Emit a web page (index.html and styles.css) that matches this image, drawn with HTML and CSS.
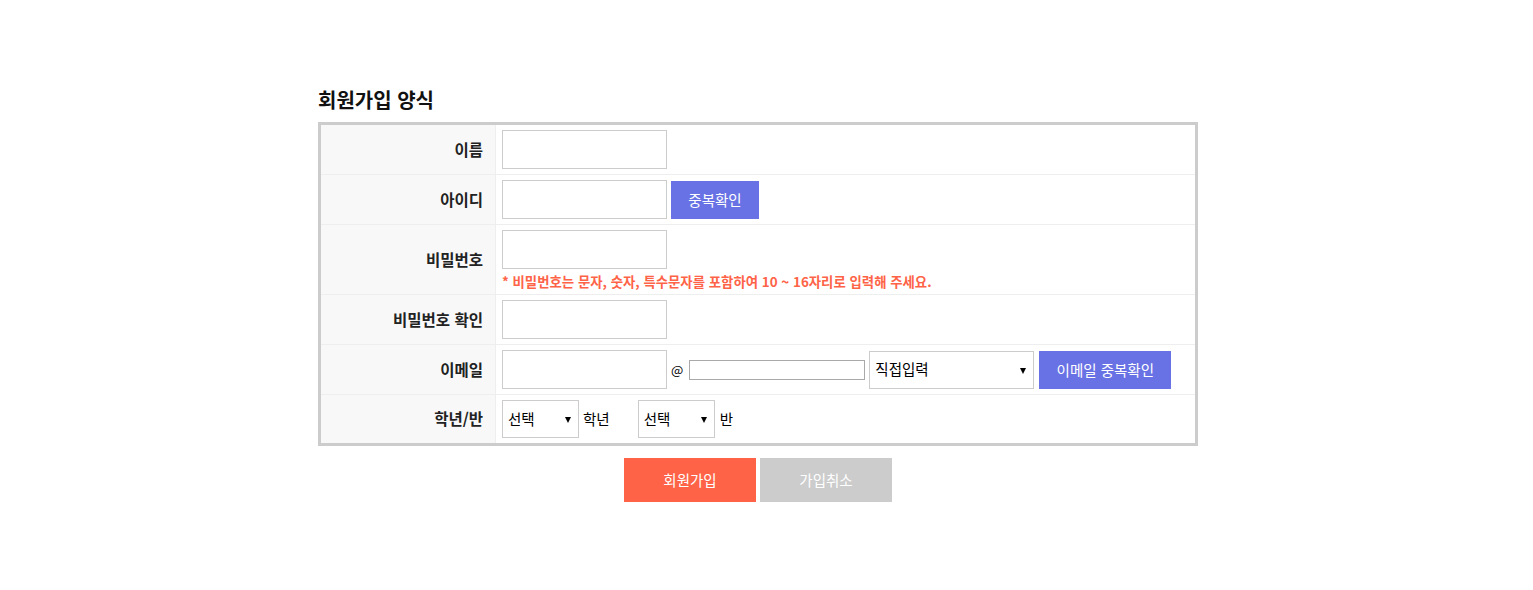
FILE: index.html
```html
<!DOCTYPE html>
<html lang="ko">
<head>
<meta charset="utf-8">
<title>회원가입 양식</title>
<link rel="stylesheet" href="styles.css">
</head>
<body>
<div class="page">
  <div class="wrap">
    <h2 class="title">회원가입 양식</h2>
    <table class="form-table">
      <tr>
        <th>이름</th>
        <td><input class="txt" type="text"></td>
      </tr>
      <tr>
        <th>아이디</th>
        <td><div class="line"><input class="txt" type="text"><button class="btn-blue btn-dup">중복확인</button></div></td>
      </tr>
      <tr class="tall">
        <th>비밀번호</th>
        <td><input class="txt" type="password"><p class="msg">* 비밀번호는 문자, 숫자, 특수문자를 포함하여 10 ~ 16자리로 입력해 주세요.</p></td>
      </tr>
      <tr>
        <th>비밀번호 확인</th>
        <td><input class="txt" type="password"></td>
      </tr>
      <tr>
        <th>이메일</th>
        <td><div class="line">
          <input class="txt" type="text">
          <span class="at">@</span>
          <input class="domain" type="text">
          <span class="sel sel-wide">직접입력</span>
          <button class="btn-blue btn-email">이메일 중복확인</button>
        </div></td>
      </tr>
      <tr class="last">
        <th>학년/반</th>
        <td><div class="line">
          <span class="sel sel-small">선택</span>
          <span class="unit unit-grade">학년</span>
          <span class="sel sel-small">선택</span>
          <span class="unit unit-class">반</span>
        </div></td>
      </tr>
    </table>
    <div class="actions">
      <button class="btn-submit">회원가입</button>
      <button class="btn-cancel">가입취소</button>
    </div>
  </div>
</div>
</body>
</html>
```
FILE: styles.css
```css
* { box-sizing: border-box; }
html, body { margin: 0; padding: 0; background: #fff; }
body {
  font-family: "Noto Sans CJK KR", "Noto Sans", sans-serif;
  color: #222;
}
.page { padding: 87px 17px 0 0; }
.wrap { width: 880px; margin: 0 auto; }
.title {
  margin: 0 0 9px 0;
  font-size: 20px;
  line-height: 26px;
  font-weight: bold;
  color: #111;
}
.form-table {
  width: 880px;
  border-collapse: collapse;
  border: 3px solid #ccc;
}
.form-table th {
  width: 176px;
  background: #f8f8f8;
  text-align: right;
  font-size: 15.5px;
  font-weight: bold;
  color: #222;
  padding: 0 12px 2px 0;
  border-right: 1px solid #eee;
  border-bottom: 1px solid #eee;
  vertical-align: middle;
}
.form-table td {
  padding: 5px 6px;
  border-bottom: 1px solid #eee;
  vertical-align: middle;
  height: 50px;
}
.form-table tr.last th, .form-table tr.last td { border-bottom: none; }
.form-table tr.last td { height: 49px; }
.line { display: flex; align-items: center; }
.txt {
  display: block;
  width: 165px;
  height: 39px;
  border: 1px solid #ccc;
  margin: 0;
  padding: 0 6px;
  font-size: 14px;
  font-family: inherit;
  outline: none;
}
.msg {
  margin: 4px 0 0 0;
  font-size: 13.4px;
  line-height: 16px;
  font-weight: bold;
  color: #ff6347;
}
.btn-blue {
  border: none;
  background: #6872e4;
  color: #fff;
  font-family: inherit;
  font-size: 14.5px;
  height: 38px;
  padding: 0 0 1px 0;
  margin: 0;
}
.btn-dup { width: 88px; margin-left: 4px; }
.btn-email { width: 132px; margin-left: 5px; }
.at {
  font-size: 13px;
  margin: 0 6px 0 4px;
  color: #000;
}
.domain {
  width: 176px;
  height: 20px;
  border: 1px solid #a9a9a9;
  margin: 0 4px 0 0;
  padding: 0 3px;
  font-family: inherit;
}
.sel {
  position: relative;
  display: flex;
  align-items: center;
  height: 38px;
  border: 1px solid #ccc;
  padding: 0 0 2px 5px;
  font-size: 14.5px;
  color: #000;
  background: #fff;
}
.sel::after {
  content: "";
  position: absolute;
  right: 7px;
  top: 16px;
  border-left: 3px solid transparent;
  border-right: 3px solid transparent;
  border-top: 6px solid #000;
}
.sel-wide { width: 165px; }
.sel-small { width: 77px; }
.unit { font-size: 14.5px; color: #000; margin-left: 4px; padding-bottom: 2px; }
.unit-grade { margin-right: 28px; }
.unit-class { margin-left: 5px; }
.actions {
  display: flex;
  justify-content: center;
  gap: 4px;
  margin-top: 12px;
}
.actions button {
  width: 132px;
  height: 44px;
  border: none;
  color: #fff;
  font-size: 14.5px;
  font-family: inherit;
  padding: 0 0 2px 0;
}
.btn-submit { background: #ff6347; }
.btn-cancel { background: #ccc; }
```
